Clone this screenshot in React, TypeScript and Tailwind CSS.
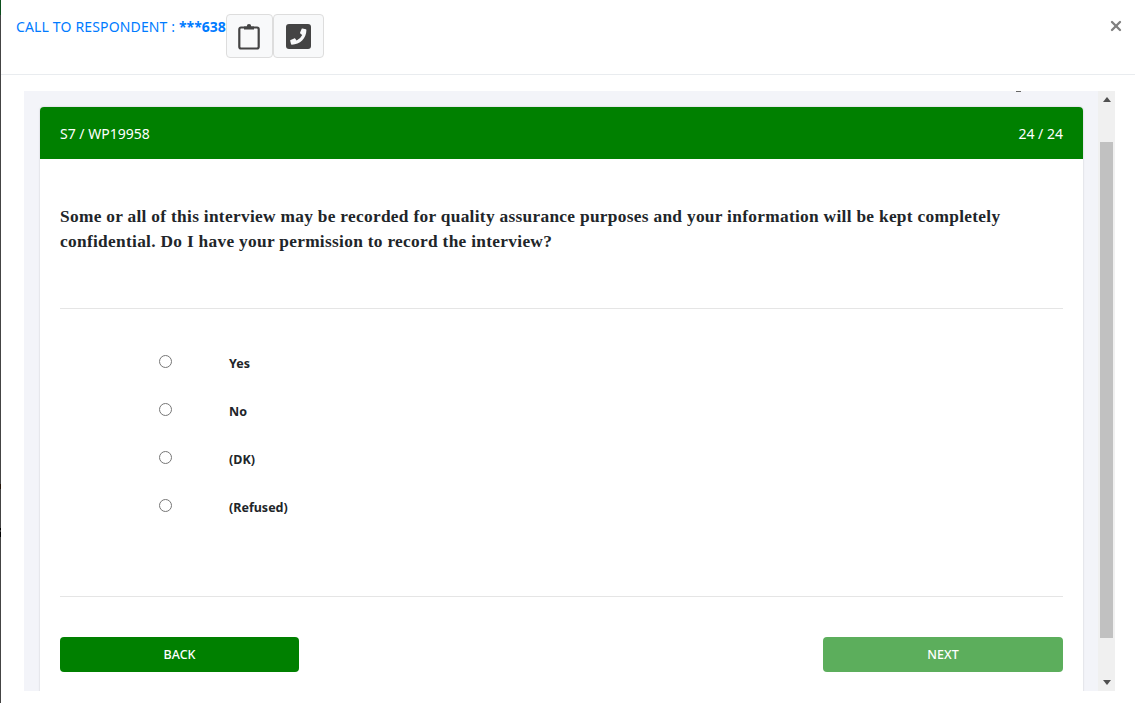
import { X } from 'lucide-react';

const options = ['Yes', 'No', '(DK)', '(Refused)'];

function ClipboardIcon() {
  return (
    <svg width="22" height="28" viewBox="0 0 22 28" fill="none" stroke="#444" strokeWidth="2.2">
      <path d="M6 5.500H3a1.700 1.700 0 0 0-1.700 1.700v17.600A1.700 1.700 0 0 0 3 26.500h16a1.700 1.700 0 0 0 1.700-1.700V7.200A1.700 1.700 0 0 0 19 5.500h-3" />
      <path d="M6 7.500h10V4.300h-2.800a2.200 2.200 0 0 0-4.400 0H6z" fill="#444" stroke="none" />
    </svg>
  );
}

function PhoneSquareIcon() {
  return (
    <svg width="25" height="25" viewBox="0 0 25 25">
      <rect width="25" height="25" rx="3" fill="#444" />
      <path
        d="M19.8 5.3l-3.3-.8c-.4-.1-.7.1-.9.4l-1.5 3.6c-.1.3 0 .7.2.9l1.9 1.5a11.700 11.700 0 0 1-5.600 5.600l-1.500-1.900c-.2-.2-.6-.3-.9-.2l-3.600 1.500c-.3.2-.5.5-.4.900l.8 3.300c.1.3.4.6.8.6C14 20.700 20.400 14.300 20.400 6.100c0-.4-.3-.7-.6-.8z"
        fill="#f8f9fa"
      />
    </svg>
  );
}

export default function App() {
  return (
    <div className="flex h-[703px] w-[1135px] overflow-hidden bg-white font-['Noto_Sans',sans-serif]">
      {/* page behind the modal peeks out on the left edge */}
      <div className="flex h-full w-px flex-col bg-[#444]">
        <div className="h-[15px] bg-[#0b4f1c]" />
        <div className="mt-[469px] h-[5px] bg-[#241408]" />
        <div className="mt-[39px] h-[2px] bg-black" />
        <div className="mt-[2px] h-[5px] bg-black" />
      </div>
      <div className="w-[1134px]">
        <header className="flex h-[75px] items-start justify-between border-b border-[#e9ecef] pl-[15px] pr-[11px]">
          <div className="flex items-start pt-[14px]">
            <h5 className="pt-[2px] text-[14px] leading-[21px] text-[#007bff]">
              <span className="tracking-[0.15px]">CALL TO RESPONDENT : </span>
              <b>***638</b>
            </h5>
            <button className="flex h-[44px] w-[47px] items-center justify-center rounded border border-[#ddd] bg-[#f8f9fa]">
              <ClipboardIcon />
            </button>
            <button className="flex h-[44px] w-[51px] items-center justify-center rounded border border-[#ddd] bg-[#f8f9fa]">
              <PhoneSquareIcon />
            </button>
          </div>
          <X className="mt-[18px] text-[#808080]" size={16} strokeWidth={3.5} />
        </header>

        <div className="relative ml-[23px] mt-[16px] flex h-[600px] w-[1091px] overflow-hidden bg-[#f3f4f9]">
          <div className="absolute left-[992px] top-0 h-px w-[5px] bg-[#666]" />
          <main className="ml-[16px] mt-[16px] h-[620px] w-[1043px] shrink-0 rounded-t bg-white shadow-[0_0_2px_rgba(0,0,0,0.2)]">
            <div className="flex h-[52px] items-center justify-between rounded-t bg-[#008000] px-[20px] text-[14px] text-white">
              <span>S7 / WP19958</span>
              <span>24 / 24</span>
            </div>
            <div className="px-[20px]">
              <p className="h-[150px] border-b border-[#e5e5e5] pt-[45px] font-['Liberation_Serif',serif] text-[17.33px] font-bold leading-[25px] tracking-[0.3px] text-[#212529]">
                Some or all of this interview may be recorded for quality assurance purposes and your information will be kept completely confidential. Do I have your permission to record the interview?
              </p>
              <div className="flex h-[288px] flex-col gap-[24px] border-b border-[#e5e5e5] pt-[43px]">
                {options.map((o) => (
                  <label key={o} className="flex h-[24px] items-center text-[12.5px] font-bold text-[#212529]">
                    <input type="radio" name="answer" className="ml-[99px] mt-[-6px] h-[13px] w-[13px]" />
                    <span className="ml-[57px]">{o}</span>
                  </label>
                ))}
              </div>
              <div className="flex justify-between pt-[40px]">
                <button className="h-[35px] w-[239px] rounded bg-[#008000] pt-px text-[12.5px] font-medium text-white">BACK</button>
                <button className="h-[35px] w-[240px] rounded bg-[#5cae5c] pt-px text-[12.5px] font-medium text-white">NEXT</button>
              </div>
            </div>
          </main>
          <div className="ml-[15px] flex w-[17px] shrink-0 flex-col items-center bg-[#f0f0f0]">
            <div className="mt-[6px] h-0 w-0 border-x-[4px] border-b-[5px] border-x-transparent border-b-[#505050]" />
            <div className="mt-[40px] h-[496px] w-[13px] bg-[#c1c1c1]" />
            <div className="mt-[42px] h-0 w-0 border-x-[4px] border-t-[5px] border-x-transparent border-t-[#505050]" />
          </div>
        </div>
      </div>
    </div>
  );
}
